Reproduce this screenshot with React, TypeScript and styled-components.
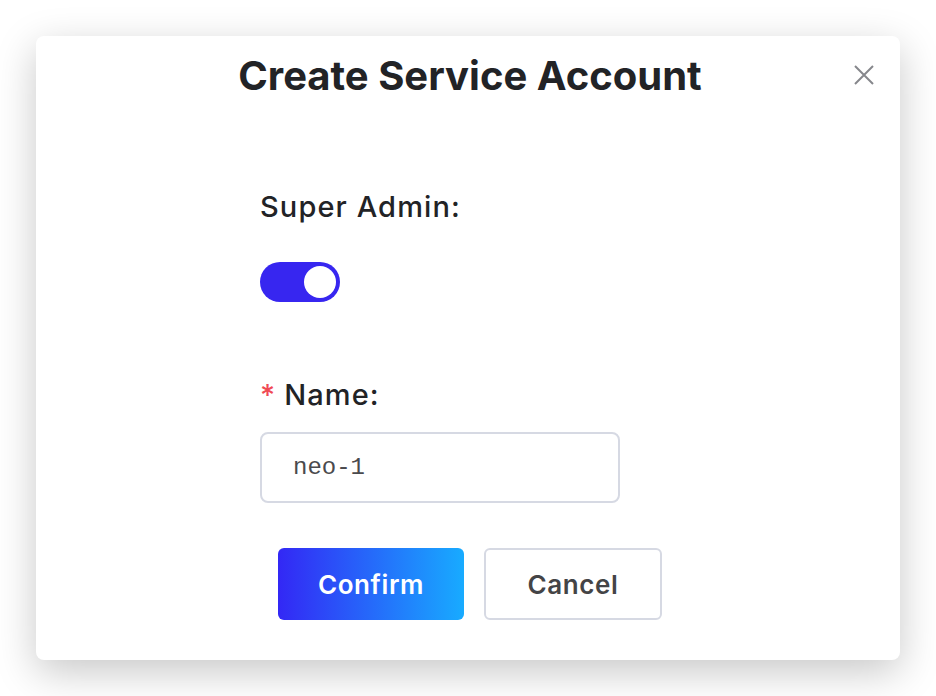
import React, { useState } from "react";
import styled, { createGlobalStyle } from "styled-components";

const GlobalStyle = createGlobalStyle`
  html, body {
    margin: 0;
    padding: 0;
    background: #ffffff;
    font-family: Inter, "Noto Sans", sans-serif;
  }
  * { box-sizing: border-box; }
`;

const Page = styled.div`
  width: 936px;
  height: 696px;
  padding: 36px;
`;

const Dialog = styled.div`
  position: relative;
  width: 864px;
  height: 624px;
  background: #fff;
  border-radius: 8px;
  box-shadow: 0 12px 40px rgba(0, 0, 0, 0.22);
  display: flex;
  flex-direction: column;
`;

const Title = styled.h1`
  margin: 0;
  height: 80px;
  line-height: 80px;
  text-align: center;
  font-size: 40px;
  font-weight: 700;
  color: #222326;
  padding-left: 4px;
`;

const CloseButton = styled.button`
  position: absolute;
  top: 23px;
  right: 20px;
  width: 32px;
  height: 32px;
  border: none;
  background: none;
  padding: 0;
  cursor: pointer;
  display: flex;
  align-items: center;
  justify-content: center;
`;

const Form = styled.div`
  width: 416px;
  margin: 73px auto 0;
  display: flex;
  flex-direction: column;
`;

const Label = styled.label<{ $gap: number }>`
  display: block;
  font-size: 29px;
  font-weight: 500;
  line-height: 36px;
  letter-spacing: 1.1px;
  color: #222326;
  margin-bottom: ${(p) => p.$gap}px;
`;

const Required = styled.span`
  color: #f04a55;
  margin-right: 8px;
`;

const Switch = styled.button<{ $on: boolean }>`
  width: 80px;
  height: 40px;
  border-radius: 20px;
  border: none;
  padding: 4px;
  background: ${(p) => (p.$on ? "#3726f0" : "#c9ccd6")};
  display: flex;
  justify-content: ${(p) => (p.$on ? "flex-end" : "flex-start")};
  cursor: pointer;
  margin-bottom: 75px;
`;

const Knob = styled.span`
  width: 32px;
  height: 32px;
  border-radius: 50%;
  background: #fff;
`;

const Input = styled.input`
  width: 360px;
  height: 71px;
  border: 2px solid #d6d9e3;
  border-radius: 8px;
  padding: 0 0 0 31px;
  font-family: "Liberation Mono", "DejaVu Sans Mono", monospace;
  font-size: 24px;
  color: #4a4a4d;
  outline: none;
`;

const Actions = styled.div`
  display: flex;
  justify-content: center;
  gap: 20px;
  margin-top: 45px;
  padding-left: 4px;
`;

const Button = styled.button<{ $primary?: boolean; $w: number }>`
  width: ${(p) => p.$w}px;
  height: 72px;
  border-radius: 6px;
  font-family: Inter, "Noto Sans", sans-serif;
  font-size: 26px;
  font-weight: 600;
  letter-spacing: 0.6px;
  cursor: pointer;
  border: ${(p) => (p.$primary ? "none" : "2px solid #d6d9e3")};
  background: ${(p) =>
    p.$primary ? "linear-gradient(90deg, #3328f5 0%, #18abff 100%)" : "#fff"};
  color: ${(p) => (p.$primary ? "#fff" : "#444446")};
`;

export default function App() {
  const [admin, setAdmin] = useState(true);
  const [name, setName] = useState("neo-1");

  return (
    <Page>
      <GlobalStyle />
      <Dialog>
        <Title>Create Service Account</Title>
        <CloseButton aria-label="Close">
          <svg width="22" height="22" viewBox="0 0 22 22">
            <path d="M2 2 L20 20 M20 2 L2 20" stroke="#86878c" strokeWidth="2" />
          </svg>
        </CloseButton>
        <Form>
          <Label $gap={37}>Super Admin:</Label>
          <Switch $on={admin} onClick={() => setAdmin(!admin)}>
            <Knob />
          </Switch>
          <Label $gap={19}>
            <Required>*</Required>Name:
          </Label>
          <Input value={name} onChange={(e) => setName(e.target.value)} />
        </Form>
        <Actions>
          <Button $primary $w={186}>Confirm</Button>
          <Button $w={178}>Cancel</Button>
        </Actions>
      </Dialog>
    </Page>
  );
}
